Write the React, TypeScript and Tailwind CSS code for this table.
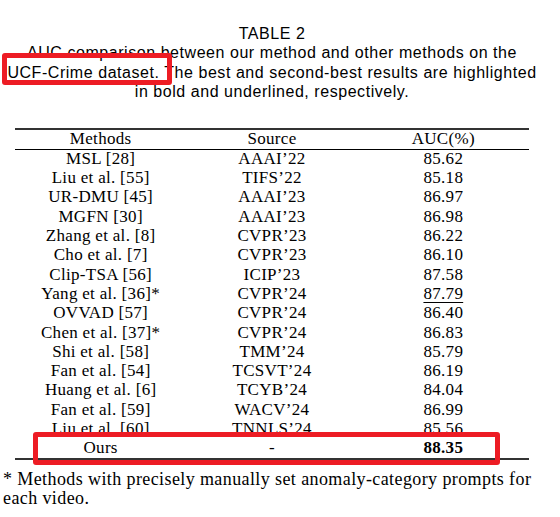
import React from "react";

const rows: [string, string, string, ("b" | "u" | "")?][] = [
  ["MSL [28]", "AAAI’22", "85.62"],
  ["Liu et al. [55]", "TIFS’22", "85.18"],
  ["UR-DMU [45]", "AAAI’23", "86.97"],
  ["MGFN [30]", "AAAI’23", "86.98"],
  ["Zhang et al. [8]", "CVPR’23", "86.22"],
  ["Cho et al. [7]", "CVPR’23", "86.10"],
  ["Clip-TSA [56]", "ICIP’23", "87.58"],
  ["Yang et al. [36]*", "CVPR’24", "87.79", "u"],
  ["OVVAD [57]", "CVPR’24", "86.40"],
  ["Chen et al. [37]*", "CVPR’24", "86.83"],
  ["Shi et al. [58]", "TMM’24", "85.79"],
  ["Fan et al. [54]", "TCSVT’24", "86.19"],
  ["Huang et al. [6]", "TCYB’24", "84.04"],
  ["Fan et al. [59]", "WACV’24", "86.99"],
  ["Liu et al. [60]", "TNNLS’24", "85.56"],
  ["Ours", "-", "88.35", "b"],
];

export default function App() {
  return (
    <div className="relative w-[560px] h-[517px] bg-white overflow-hidden text-black">
      <div className="ml-[3px] w-[538px] pt-[24px]">
        <div
          className="text-center text-[16px] leading-[19.3px] tracking-[0.55px]"
          style={{ fontFamily: '"Liberation Sans", Arial, sans-serif' }}
        >
          <div>TABLE 2</div>
          <div>AUC comparison between our method and other methods on the</div>
          <div>UCF-Crime dataset. The best and second-best results are highlighted</div>
          <div>in bold and underlined, respectively.</div>
        </div>

        <div
          className="mx-[12px] mt-[27px] text-[17px] tracking-[0.3px]"
          style={{ fontFamily: '"Liberation Serif", "Times New Roman", serif' }}
        >
          <div className="h-[1.5px] bg-[#333]" />
          <div className="grid grid-cols-3 h-[19px] items-center text-center leading-none pb-[3px]">
            <div>Methods</div>
            <div>Source</div>
            <div>AUC(%)</div>
          </div>
          <div className="h-px bg-black" />
          {rows.map(([m, s, a, st]) => (
            <div
              key={m + s}
              className="grid grid-cols-3 h-[19.3px] items-center text-center leading-none pb-[2px]"
            >
              <div>{m}</div>
              <div>{s}</div>
              <div>
                <span
                  className={
                    st === "b"
                      ? "font-bold"
                      : st === "u"
                      ? "underline underline-offset-[3px] decoration-1"
                      : ""
                  }
                >
                  {a}
                </span>
              </div>
            </div>
          ))}
          <div className="h-[1.5px] bg-[#333]" />
        </div>

        <div
          className="mt-[10px] text-[18px] leading-[19px] tracking-[0.4px]"
          style={{ fontFamily: '"Liberation Serif", "Times New Roman", serif' }}
        >
          * Methods with precisely manually set anomaly-category prompts for
          <br />
          each video.
        </div>
      </div>

      <div className="absolute left-[2px] top-[53px] w-[170px] h-[32px] border-[5px] border-[#ed1c24] rounded-[3px]" />
      <div className="absolute left-[33px] top-[432px] w-[467px] h-[33px] border-[5px] border-[#ed1c24] rounded-[3px]" />
    </div>
  );
}
